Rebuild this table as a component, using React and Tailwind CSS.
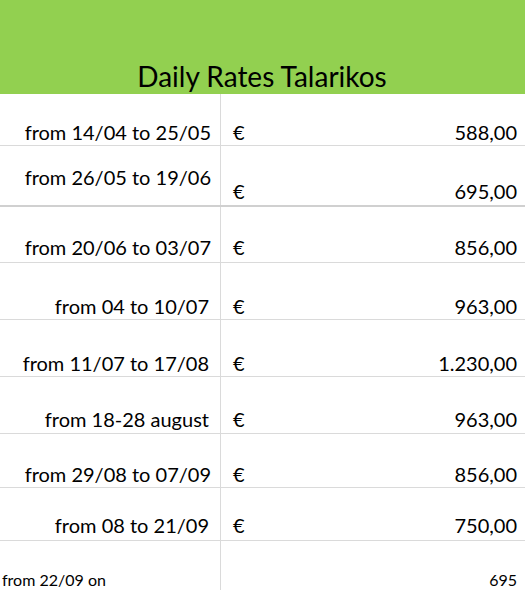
import React from "react";

const rows = [
  { label: "from 14/04 to 25/05", value: "588,00", h: "h-[52px]", pb: "pb-[1px]", pr: "pr-[9px]" },
  { label: "from 26/05 to 19/06", value: "695,00", h: "h-[61px]", pb: "pb-[2px]", pr: "pr-[9px]", labelPb: "pb-[16px]", thick: true },
  { label: "from 20/06 to 03/07", value: "856,00", h: "h-[56px]", pb: "pb-[3px]", pr: "pr-[9px]" },
  { label: "from 04 to 10/07", value: "963,00", h: "h-[57px]", pb: "pb-[1px]", pr: "pr-[11px]" },
  { label: "from 11/07 to 17/08", value: "1.230,00", h: "h-[57px]", pb: "pb-[1px]", pr: "pr-[11px]" },
  { label: "from 18-28 august", value: "963,00", h: "h-[57px]", pb: "pb-[2px]", pr: "pr-[11px]" },
  { label: "from 29/08 to 07/09", value: "856,00", h: "h-[54px]", pb: "pb-[1px]", pr: "pr-[9px]" },
  { label: "from 08 to 21/09", value: "750,00", h: "h-[53px]", pb: "pb-[3px]", pr: "pr-[11px]" },
];

export default function App() {
  return (
    <div className="w-[525px] h-[590px] overflow-hidden bg-white text-black font-['Lato',sans-serif]">
      <div className="h-[94px] bg-[#92d050] flex items-end justify-center pb-[2px]">
        <h1 className="text-[28px] leading-[32px] ml-[-1px]">Daily Rates Talarikos</h1>
      </div>

      {rows.map((row) => (
        <div
          key={row.label}
          className={`grid grid-cols-[221px_1fr] ${row.h} ${
            row.thick ? "border-b-2 border-[#d0d0d0]" : "border-b border-[#dadada]"
          } text-[20px] leading-[24px]`}
        >
          <div
            className={`flex items-end justify-end border-r border-[#dadada] ${row.pr} ${
              row.labelPb || row.pb
            }`}
          >
            {row.label}
          </div>
          <div className={`flex items-end justify-between pl-[12px] pr-[8px] ${row.pb}`}>
            <span>€</span>
            <span>{row.value}</span>
          </div>
        </div>
      ))}

      <div className="grid grid-cols-[221px_1fr] h-[49px] text-[16px] leading-[19px]">
        <div className="flex items-end border-r border-[#dadada] pl-[2px] pb-[1px]">
          from 22/09 on
        </div>
        <div className="flex items-end justify-end pr-[8px] pb-[1px]">695</div>
      </div>
    </div>
  );
}
